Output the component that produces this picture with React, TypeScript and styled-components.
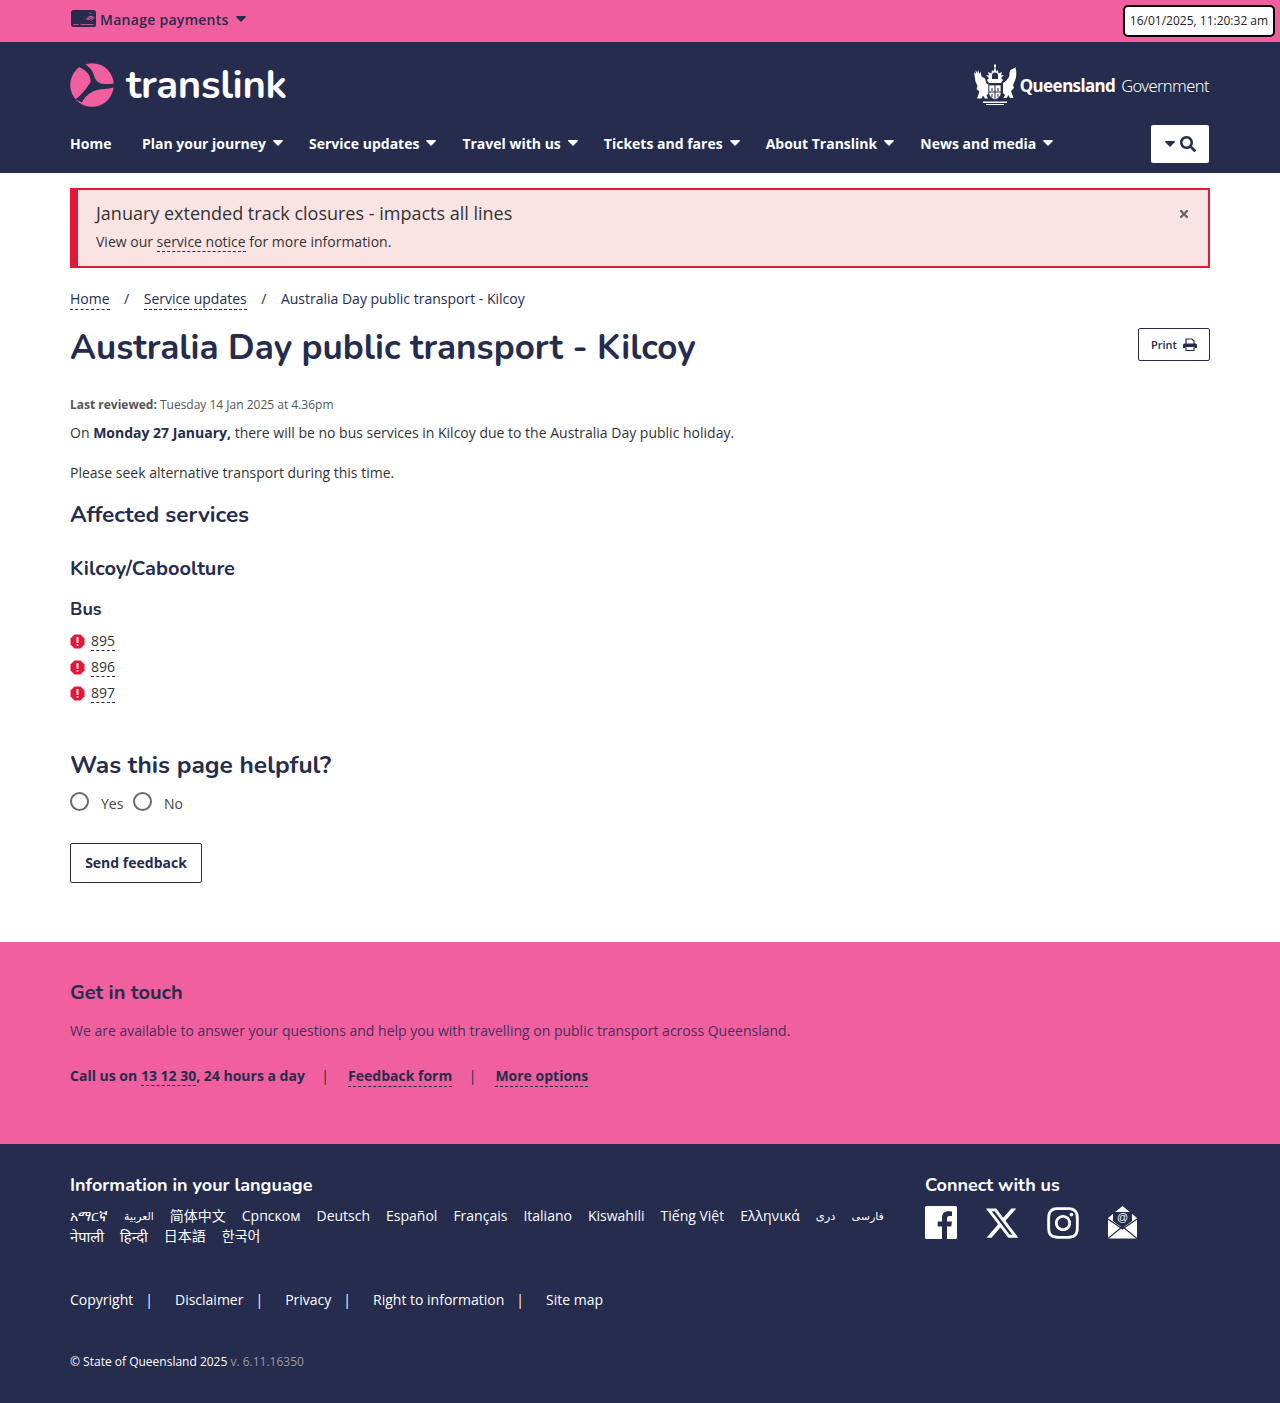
import React from 'react'
import styled, { createGlobalStyle } from 'styled-components'
import { FaInstagram, FaSearch, FaTimes } from 'react-icons/fa'
import { FaXTwitter } from 'react-icons/fa6'

const navy = '#252c4e'
const pink = '#f0609f'
const crimson = '#e31837'
const heading = "Nunito, Lato, 'Open Sans', sans-serif"

const GlobalStyle = createGlobalStyle`
  html, body { margin: 0; padding: 0; background: #fff; }
  body {
    color: ${navy};
    font-family: 'Open Sans', 'Noto Sans', 'Noto Sans CJK SC', 'DejaVu Sans', sans-serif;
    font-size: 14px;
  }
  * { box-sizing: border-box; }
`

const Container = styled.div`
  width: 1140px;
  margin: 0 auto;
`

const TopBar = styled.div`
  height: 42px;
  background: ${pink};
  position: relative;
`

const TopInner = styled(Container)`
  display: flex;
  align-items: center;
  height: 38px;
  padding-left: 1px;
`

const Manage = styled.a`
  display: flex;
  align-items: center;
  font-weight: 600;
  font-size: 14px;
  letter-spacing: 0.28px;
  color: ${navy};
  gap: 4px;
  svg.caret { margin-left: 3px; }
`

const Clock = styled.div`
  position: absolute;
  top: 5px;
  right: 5px;
  width: 152px;
  height: 32px;
  border: 2px solid #000;
  border-radius: 5px;
  background: #fff;
  color: #222;
  font-size: 12px;
  line-height: 28px;
  text-align: center;
  white-space: nowrap;
`

const Header = styled.header`
  height: 131px;
  background: ${navy};
`

const BrandRow = styled(Container)`
  height: 83px;
  display: flex;
  align-items: center;
  justify-content: space-between;
`

const Brand = styled.div`
  display: flex;
  align-items: center;
  gap: 12px;
  margin-top: 3px;
`

const Wordmark = styled.span`
  color: #fff;
  font-family: ${heading};
  font-size: 40px;
  font-weight: 700;
  line-height: 44px;
  letter-spacing: -0.3px;
`

const Gov = styled.div`
  display: flex;
  align-items: center;
  margin-top: 4px;
  margin-right: 1px;
  color: #fff;
  font-family: 'Noto Sans', sans-serif;
  font-size: 17px;
  b { font-weight: 700; margin-left: 3px; letter-spacing: -0.6px; }
  span { font-size: 16.500px; font-weight: 300; margin-left: 6px; letter-spacing: -0.6px; }
`

const NavRow = styled(Container)`
  display: flex;
  align-items: center;
  height: 38px;
`

const NavList = styled.nav`
  display: flex;
  flex: 1;
  align-items: center;
  gap: 26px;
  margin-top: -2px;
`

const NavItem = styled.a<{ $home?: boolean }>`
  display: flex;
  align-items: center;
  gap: 7px;
  color: #fff;
  font-size: 14px;
  font-weight: 700;
  white-space: nowrap;
  margin-right: ${(p) => (p.$home ? 4.5 : 0)}px;
`

const SearchButton = styled.button`
  width: 58px;
  height: 38px;
  margin-right: 1px;
  border: 0;
  border-radius: 2px;
  background: #fff;
  color: ${navy};
  display: flex;
  align-items: center;
  justify-content: center;
  gap: 5px;
  padding: 0;
`

const Alert = styled.div`
  position: relative;
  height: 80px;
  margin-top: 15px;
  padding: 11px 18px;
  background: #f9e3e3;
  border: 2px solid ${crimson};
  border-left-width: 8px;
  color: #333;
`

const AlertTitle = styled.div`
  font-size: 18px;
  line-height: 24px;
`

const AlertText = styled.div`
  margin-top: 7px;
  font-size: 14px;
  line-height: 20px;
`

const Close = styled.span`
  position: absolute;
  top: 18px;
  right: 18px;
  color: #666;
  font-size: 12px;
  line-height: 12px;
`

const TextLink = styled.a`
  color: inherit;
  border-bottom: 1px dashed ${navy};
`

const Crumbs = styled.div`
  display: flex;
  margin-top: 21px;
  line-height: 20px;
  color: ${navy};
  gap: 14.500px;
`

const TitleRow = styled.div`
  display: flex;
  justify-content: space-between;
  align-items: flex-start;
  margin-top: 8px;
`

const Title = styled.h1`
  margin: 8px 0 0;
  font-family: ${heading};
  font-size: 35px;
  font-weight: 700;
  line-height: 44px;
`

const PrintButton = styled.button`
  display: flex;
  align-items: center;
  justify-content: center;
  gap: 6px;
  width: 72px;
  height: 33px;
  margin-top: 10px;
  background: #fff;
  border: 1px solid ${navy};
  border-radius: 2px;
  color: ${navy};
  font-family: inherit;
  font-size: 11px;
  font-weight: 600;
  padding: 0;
`

const Reviewed = styled.div`
  margin-top: 26px;
  font-size: 12px;
  line-height: 18px;
  color: #555;
  b { font-weight: 700; }
`

const Para = styled.p<{ $top: number }>`
  margin: ${(p) => p.$top}px 0 0;
  line-height: 20px;
  color: #333;
  b { color: ${navy}; }
`

const ContactPara = styled(Para)`
  color: #4a2f5c;
`

const H2 = styled.h2<{ $top: number; $size: number }>`
  margin: ${(p) => p.$top}px 0 0;
  font-family: ${heading};
  font-size: ${(p) => p.$size}px;
  font-weight: 700;
  line-height: 30px;
`

const RouteList = styled.ul`
  list-style: none;
  margin: 4px 0 0;
  padding: 0;
`

const RouteItem = styled.li`
  display: flex;
  align-items: center;
  gap: 6px;
  height: 26px;
  color: #333;
  svg { color: ${crimson}; }
`

const RadioRow = styled.div`
  display: flex;
  align-items: center;
  height: 24px;
  margin-top: 11px;
`

const Radio = styled.span`
  width: 19px;
  height: 19px;
  border: 2px solid #6b6b6b;
  border-radius: 50%;
  margin-top: -4px;
`

const RadioLabel = styled.label`
  margin: 0 9.500px 0 12px;
  color: #444;
`

const Feedback = styled.button`
  display: block;
  width: 132px;
  height: 40px;
  margin-top: 28px;
  background: #fff;
  border: 1px solid ${navy};
  border-radius: 2px;
  color: ${navy};
  font-family: inherit;
  font-size: 14px;
  font-weight: 700;
  padding: 0 0 2px;
`

const Contact = styled.section`
  height: 202px;
  margin-top: 59px;
  padding-top: 36px;
  background: ${pink};
`

const ContactLinks = styled.div`
  display: flex;
  margin-top: 25px;
  font-weight: 700;
  line-height: 20px;
  color: ${navy};
`

const Pipe = styled.span`
  margin: 0 19px 0 16.500px;
  font-weight: 400;
`

const Footer = styled.footer`
  height: 259px;
  background: ${navy};
  color: #fff;
  padding-top: 26px;
`

const FooterTop = styled(Container)`
  display: flex;
  justify-content: space-between;
`

const LangCol = styled.div`
  width: 830px;
`

const ConnectCol = styled.div`
  width: 285px;
`

const FooterHead = styled.h3`
  margin: 0;
  font-family: ${heading};
  font-size: 18px;
  font-weight: 700;
  line-height: 30px;
`

const Languages = styled.div`
  display: flex;
  flex-wrap: wrap;
  align-items: center;
  column-gap: 16px;
  line-height: 20px;
  margin-top: 6px;
`

const Lang = styled.span<{ $size: number }>`
  font-size: ${(p) => p.$size}px;
`

const Socials = styled.div`
  display: flex;
  gap: 29px;
  margin-top: 6px;
`

const SocialSlot = styled.a<{ $start?: boolean }>`
  display: flex;
  align-items: center;
  justify-content: ${(p) => (p.$start ? 'flex-start' : 'center')};
  width: 32px;
  height: 33px;
  color: #fff;
  svg { flex: none; }
`

const FooterLinks = styled.div`
  display: flex;
  margin-top: 44px;
  line-height: 20px;
`

const FooterLink = styled.span`
  margin-right: 12px;
`

const FooterPipe = styled.span`
  margin-right: 22px;
`

const Legal = styled.div`
  margin-top: 43px;
  font-size: 12px;
  line-height: 18px;
  span { color: #9a9a9a; }
`

const languages: [string, number][] = [
  ['አማርኛ', 14], ['العربية', 10.9], ['简体中文', 14], ['Српском', 14], ['Deutsch', 14], ['Español', 14],
  ['Français', 14], ['Italiano', 14], ['Kiswahili', 14], ['Tiếng Việt', 14], ['Ελληνικά', 14],
  ['دری', 11.5], ['فارسی', 11], ['नेपाली', 14.7], ['हिन्दी', 14.7], ['日本語', 14], ['한국어', 14],
]
const navItems = ['Plan your journey', 'Service updates', 'Travel with us', 'Tickets and fares', 'About Translink', 'News and media']
const footerLinks = ['Copyright', 'Disclaimer', 'Privacy', 'Right to information', 'Site map']

const Caret = ({ className }: { className?: string }) => (
  <svg className={className} width="10" height="6" viewBox="0 0 10 6" fill="currentColor">
    <path d="M.8 0h8.400c.7 0 1 .8.5 1.300L5.500 5.600a.7.7 0 0 1-1 0L.3 1.300C-.2.800.1 0 .8 0z" />
  </svg>
)

const Logo = () => (
  <svg width="44" height="44" viewBox="0 0 44 44">
    <circle cx="22" cy="22" r="21.800" fill={pink} />
    <path d="M14 0C18 3 21 6 22.500 8.500C24 12 25 17 28 19C31 21.500 38 21.500 44 20.500L44 24.500C38 26.500 30 25.500 24 28C20 29.500 14.500 34 12 39.500L5.500 36.500C10 32.500 15 28 17.500 23.500C19 21.500 20.500 20 20.700 18.300C20.500 15 19.500 13 18 10.500C16 8 13 6 9 4Z" fill={navy} />
  </svg>
)

const Crest = () => (
  <svg width="44" height="43" viewBox="0 0 44 43" fill="#fff">
    <path d="M1 8l2 2-.5-4 2 3 .5-3 1.500 4 1-2.500 1 5 3.500 2 1.500 5 2 1v9l-2 2 1.500 3h-3l-2-3-1.500 3H4l2.500-7-3-2.500 1-3-2-4.500z" />
    <path d="M43 3c-1 2-5 1-6 4-1 2 0 4-1 6l-3 4-3 2v10l2 2-1.500 3h3l2-3 1.500 3h3.500l-2.500-7 3-3-1-3 2-4.500c1.500-3 2-9.500 0-13.500z" />
    <path d="M16 21h12v8.500c0 3-3 5-6 6.500-3-1.500-6-3.500-6-6.500z" stroke={navy} strokeWidth="0.700" />
    <path d="M22 21v15M16 28h12M19 24v3M25 24v3M19 30v3M25 30v3" stroke={navy} strokeWidth="1" />
    <path d="M16 19l-2-3 2-2-3-3 3 .5L15 8l3.500 1.500L19 6l1.500 1.500L22 3l1.500 4.500L25 6l.5 3.500L29 8l-1 3.500 3-.5-3 3 2 2-2 3z" />
    <path d="M22 8.500a3 3 0 0 1 3 3V15h-6v-3.500a3 3 0 0 1 3-3z" fill={navy} />
    <path d="M21 .5h2v3h-2z" />
    <path d="M10 37.500h24v1.500H10zM13 40h18v1H13z" />
  </svg>
)

const CardReader = () => (
  <svg width="25" height="18" viewBox="0 0 25 18">
    <rect width="25" height="17" rx="2.500" fill={navy} />
    <path d="M2.500 14.500h5M9.500 14.500h13" stroke={pink} strokeWidth="0.800" />
    <path d="M15.500 10a4.500 4.500 0 0 1 8 -2M17 10a3 3 0 0 1 5.500 -1.500M18.500 10a1.500 1.500 0 0 1 3 0M20 10v.5M19 2.500l1.500 1.500" stroke={pink} strokeWidth="0.900" fill="none" />
  </svg>
)

const PrintIcon = () => (
  <svg width="14" height="13" viewBox="0 0 14 13" fill="none">
    <path d="M3 6V1h6l2 2v3" stroke={navy} strokeWidth="1.200" />
    <path d="M1.500 5.500h11A1.500 1.500 0 0 1 14 7v3h-2.500v-1h-9v1H0V7a1.500 1.500 0 0 1 1.500-1.500z" fill={navy} />
    <path d="M3 9.500v3h8v-3" stroke={navy} strokeWidth="1.200" />
  </svg>
)

const FacebookIcon = () => (
  <svg width="32" height="33" viewBox="0 0 32 33">
    <path d="M1.500 0h29A1.500 1.500 0 0 1 32 1.500v30a1.500 1.500 0 0 1-1.500 1.500H22V20.500h4.300l.6-5H22v-3c0-1.500.5-2.500 2.500-2.500H27V5.500c-.5 0-2-.2-3.800-.2-3.700 0-6.200 2.200-6.200 6.400v3.800h-4.300v5H17V33H1.500A1.500 1.500 0 0 1 0 31.500v-30A1.500 1.500 0 0 1 1.500 0z" fill="#fff" />
  </svg>
)

const MailIcon = () => (
  <svg width="29" height="33" viewBox="0 0 29 33">
    <path d="M0 12L14.500 0 29 12v20.500H0z" fill="#fff" />
    <path d="M5 15V6h19v9L14.500 22z" fill={navy} />
    <path d="M0 13l14.500 10L29 13M0 32.500l14.500-12 14.500 12" fill="none" stroke={navy} strokeWidth="1.200" />
    <text x="14.500" y="15" textAnchor="middle" fontSize="11" fill="#fff" fontFamily="'Liberation Sans', sans-serif">@</text>
  </svg>
)

const WarningIcon = () => (
  <svg width="15" height="15" viewBox="0 0 15 15">
    <path d="M4.500 0.500h6l4 4v6l-4 4h-6l-4-4v-6z" fill="currentColor" />
    <rect x="6.500" y="3" width="2" height="6" rx="0.800" fill="#fff" />
    <rect x="6.500" y="10" width="2" height="2" rx="1" fill="#fff" />
  </svg>
)

const App: React.FC = () => (
  <>
    <GlobalStyle />
    <TopBar>
      <TopInner>
        <Manage>
          <CardReader />
          Manage payments
          <Caret className="caret" />
        </Manage>
      </TopInner>
      <Clock>16/01/2025, 11:20:32 am</Clock>
    </TopBar>
    <Header>
      <BrandRow>
        <Brand>
          <Logo />
          <Wordmark>translink</Wordmark>
        </Brand>
        <Gov>
          <Crest />
          <b>Queensland</b>
          <span>Government</span>
        </Gov>
      </BrandRow>
      <NavRow>
        <NavList>
          <NavItem $home>Home</NavItem>
          {navItems.map((item) => (
            <NavItem key={item}>
              {item}
              <Caret />
            </NavItem>
          ))}
        </NavList>
        <SearchButton>
          <Caret />
          <FaSearch size={16} />
        </SearchButton>
      </NavRow>
    </Header>
    <main>
      <Container>
        <Alert>
          <AlertTitle>January extended track closures - impacts all lines</AlertTitle>
          <AlertText>
            View our <TextLink>service notice</TextLink> for more information.
          </AlertText>
          <Close><FaTimes /></Close>
        </Alert>
        <Crumbs>
          <TextLink>Home</TextLink>
          <span>/</span>
          <TextLink>Service updates</TextLink>
          <span>/</span>
          <span>Australia Day public transport - Kilcoy</span>
        </Crumbs>
        <TitleRow>
          <Title>Australia Day public transport - Kilcoy</Title>
          <PrintButton>
            Print <PrintIcon />
          </PrintButton>
        </TitleRow>
        <Reviewed>
          <b>Last reviewed:</b> Tuesday 14 Jan 2025 at 4.36pm
        </Reviewed>
        <Para $top={9}>
          On <b>Monday 27 January,</b> there will be no bus services in Kilcoy due to the Australia Day public holiday.
        </Para>
        <Para $top={20}>Please seek alternative transport during this time.</Para>
        <H2 $top={17} $size={22.500}>Affected services</H2>
        <H2 $top={24} $size={20}>Kilcoy/Caboolture</H2>
        <H2 $top={10} $size={18}>Bus</H2>
        <RouteList>
          {['895', '896', '897'].map((route) => (
            <RouteItem key={route}>
              <WarningIcon />
              <TextLink>{route}</TextLink>
            </RouteItem>
          ))}
        </RouteList>
        <H2 $top={44} $size={24.500}>Was this page helpful?</H2>
        <RadioRow>
          <Radio />
          <RadioLabel>Yes</RadioLabel>
          <Radio />
          <RadioLabel>No</RadioLabel>
        </RadioRow>
        <Feedback>Send feedback</Feedback>
      </Container>
    </main>
    <Contact>
      <Container>
        <H2 $top={0} $size={20}>Get in touch</H2>
        <ContactPara $top={13}>
          We are available to answer your questions and help you with travelling on public transport across Queensland.
        </ContactPara>
        <ContactLinks>
          <span>Call us on <TextLink>13 12 30</TextLink>, 24 hours a day</span>
          <Pipe>|</Pipe>
          <TextLink>Feedback form</TextLink>
          <Pipe>|</Pipe>
          <TextLink>More options</TextLink>
        </ContactLinks>
      </Container>
    </Contact>
    <Footer>
      <FooterTop>
        <LangCol>
          <FooterHead>Information in your language</FooterHead>
          <Languages>
            {languages.map(([lang, size]) => (
              <Lang key={lang} $size={size}>{lang}</Lang>
            ))}
          </Languages>
        </LangCol>
        <ConnectCol>
          <FooterHead>Connect with us</FooterHead>
          <Socials>
            <SocialSlot><FacebookIcon /></SocialSlot>
            <SocialSlot><FaXTwitter size={36} /></SocialSlot>
            <SocialSlot><FaInstagram size={36} /></SocialSlot>
            <SocialSlot $start><MailIcon /></SocialSlot>
          </Socials>
        </ConnectCol>
      </FooterTop>
      <Container>
        <FooterLinks>
          {footerLinks.map((link, i) => (
            <React.Fragment key={link}>
              <FooterLink>{link}</FooterLink>
              {i < footerLinks.length - 1 && <FooterPipe>|</FooterPipe>}
            </React.Fragment>
          ))}
        </FooterLinks>
        <Legal>
          © State of Queensland 2025 <span>v. 6.11.16350</span>
        </Legal>
      </Container>
    </Footer>
  </>
)

export default App
